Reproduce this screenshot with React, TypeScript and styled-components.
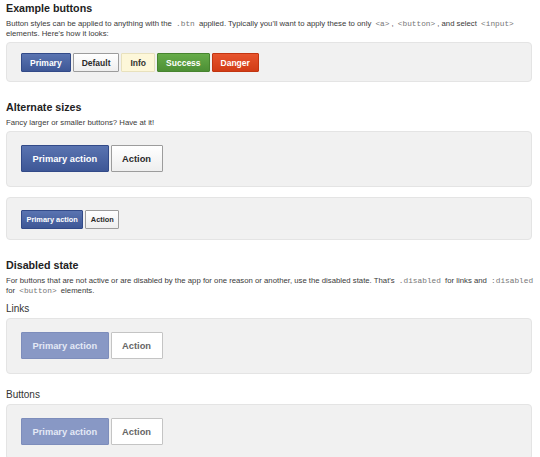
import styled, {createGlobalStyle, css} from 'styled-components'

const GlobalStyle = createGlobalStyle`
  html, body {
    margin: 0;
    padding: 0;
    background: #ffffff;
  }
  body {
    font-family: "Liberation Sans", Arial, sans-serif;
    color: #333333;
  }
`

const Page = styled.main`
  width: 526px;
  padding: 1px 0 0 6px;
`

const Heading = styled.h3<{$first?: boolean}>`
  margin: ${p => (p.$first ? '0' : '18px')} 0 4px;
  font-size: 10.7px;
  line-height: 14px;
  font-weight: bold;
  color: #222222;
`

const Label = styled.h4<{$gap?: number}>`
  margin: ${p => p.$gap ?? 7}px 0 3px;
  font-size: 10px;
  line-height: 12px;
  font-weight: normal;
  color: #333333;
`

const Text = styled.p`
  margin: 0 0 3px;
  font-size: 7.75px;
  line-height: 10px;
  white-space: nowrap;
  color: #3a3a3a;
`

const Code = styled.code`
  font-family: "Liberation Mono", "Courier New", monospace;
  font-size: 7.8px;
  color: #777777;
  padding: 0 2px;
`

const Well = styled.div<{$pad: [number, number]; $gap?: number}>`
  display: flex;
  gap: 2px;
  margin-top: ${p => p.$gap ?? 0}px;
  padding: ${p => p.$pad[0]}px 14px ${p => p.$pad[1]}px;
  background: #f1f1f1;
  border: 1px solid #e4e4e4;
  border-radius: 4px;
`

type Variant = 'primary' | 'default' | 'info' | 'success' | 'danger'
type Size = 'normal' | 'large' | 'small'

const variants: Record<Variant, ReturnType<typeof css>> = {
  primary: css`
    color: #ffffff;
    background: linear-gradient(#5a74b1, #3e5796);
    border-color: #324a88;
  `,
  default: css`
    color: #2a2a2a;
    background: linear-gradient(#ffffff, #eeeeee);
    border-color: #9c9c9c;
  `,
  info: css`
    color: #333333;
    background: #fdf7d9;
    border-color: #e8e1bd;
  `,
  success: css`
    color: #ffffff;
    background: linear-gradient(#66ac49, #4d8f35);
    border-color: #47842f;
  `,
  danger: css`
    color: #ffffff;
    background: linear-gradient(#e7542d, #d13c16);
    border-color: #c23511;
  `,
}

const sizes: Record<Size, ReturnType<typeof css>> = {
  normal: css`
    height: 19px;
    padding: 0 8px;
    font-size: 8.5px;
  `,
  large: css`
    height: 27px;
    padding: 0 10.5px;
    font-size: 9.3px;
  `,
  small: css`
    height: 19px;
    padding: 0 4.5px;
    font-size: 7.4px;
  `,
}

const Btn = styled.button<{$variant: Variant; $size: Size; $off?: boolean}>`
  box-sizing: border-box;
  display: inline-flex;
  align-items: center;
  border: 1px solid;
  border-radius: 1px;
  font-family: "Liberation Sans", Arial, sans-serif;
  font-weight: bold;
  text-decoration: none;
  cursor: pointer;
  ${p => sizes[p.$size]}
  ${p => variants[p.$variant]}
  ${p =>
    p.$off &&
    (p.$variant === 'primary'
      ? css`
          background: #8898c5;
          border-color: #7d8dbb;
          color: #e4e9f5;
          cursor: default;
        `
      : css`
          background: #ffffff;
          border-color: #c4c4c4;
          color: #666666;
          cursor: default;
        `)}
`

export default function App() {
  return (
    <Page>
      <GlobalStyle />

      <Heading $first>Example buttons</Heading>
      <Text>
        Button styles can be applied to anything with the <Code>.btn</Code> applied.
        Typically you'll want to apply these to only <Code>&lt;a&gt;</Code>,{' '}
        <Code>&lt;button&gt;</Code>, and select <Code>&lt;input&gt;</Code>
        <br />
        elements. Here's how it looks:
      </Text>
      <Well $pad={[10, 9]}>
        <Btn $variant="primary" $size="normal">Primary</Btn>
        <Btn $variant="default" $size="normal">Default</Btn>
        <Btn $variant="info" $size="normal">Info</Btn>
        <Btn $variant="success" $size="normal">Success</Btn>
        <Btn $variant="danger" $size="normal">Danger</Btn>
      </Well>

      <Heading>Alternate sizes</Heading>
      <Text>Fancy larger or smaller buttons? Have at it!</Text>
      <Well $pad={[13, 14]}>
        <Btn $variant="primary" $size="large">Primary action</Btn>
        <Btn $variant="default" $size="large">Action</Btn>
      </Well>
      <Well $pad={[12, 10]} $gap={10}>
        <Btn $variant="primary" $size="small">Primary action</Btn>
        <Btn $variant="default" $size="small">Action</Btn>
      </Well>

      <Heading>Disabled state</Heading>
      <Text>
        For buttons that are not active or are disabled by the app for one reason or
        another, use the disabled state. That's <Code>.disabled</Code> for links and{' '}
        <Code>:disabled</Code>
        <br />
        for <Code>&lt;button&gt;</Code> elements.
      </Text>
      <Label>Links</Label>
      <Well $pad={[13, 14]}>
        <Btn as="a" $variant="primary" $size="large" $off>Primary action</Btn>
        <Btn as="a" $variant="default" $size="large" $off>Action</Btn>
      </Well>

      <Label $gap={15}>Buttons</Label>
      <Well $pad={[13, 14]}>
        <Btn $variant="primary" $size="large" $off disabled>Primary action</Btn>
        <Btn $variant="default" $size="large" $off disabled>Action</Btn>
      </Well>
    </Page>
  )
}
